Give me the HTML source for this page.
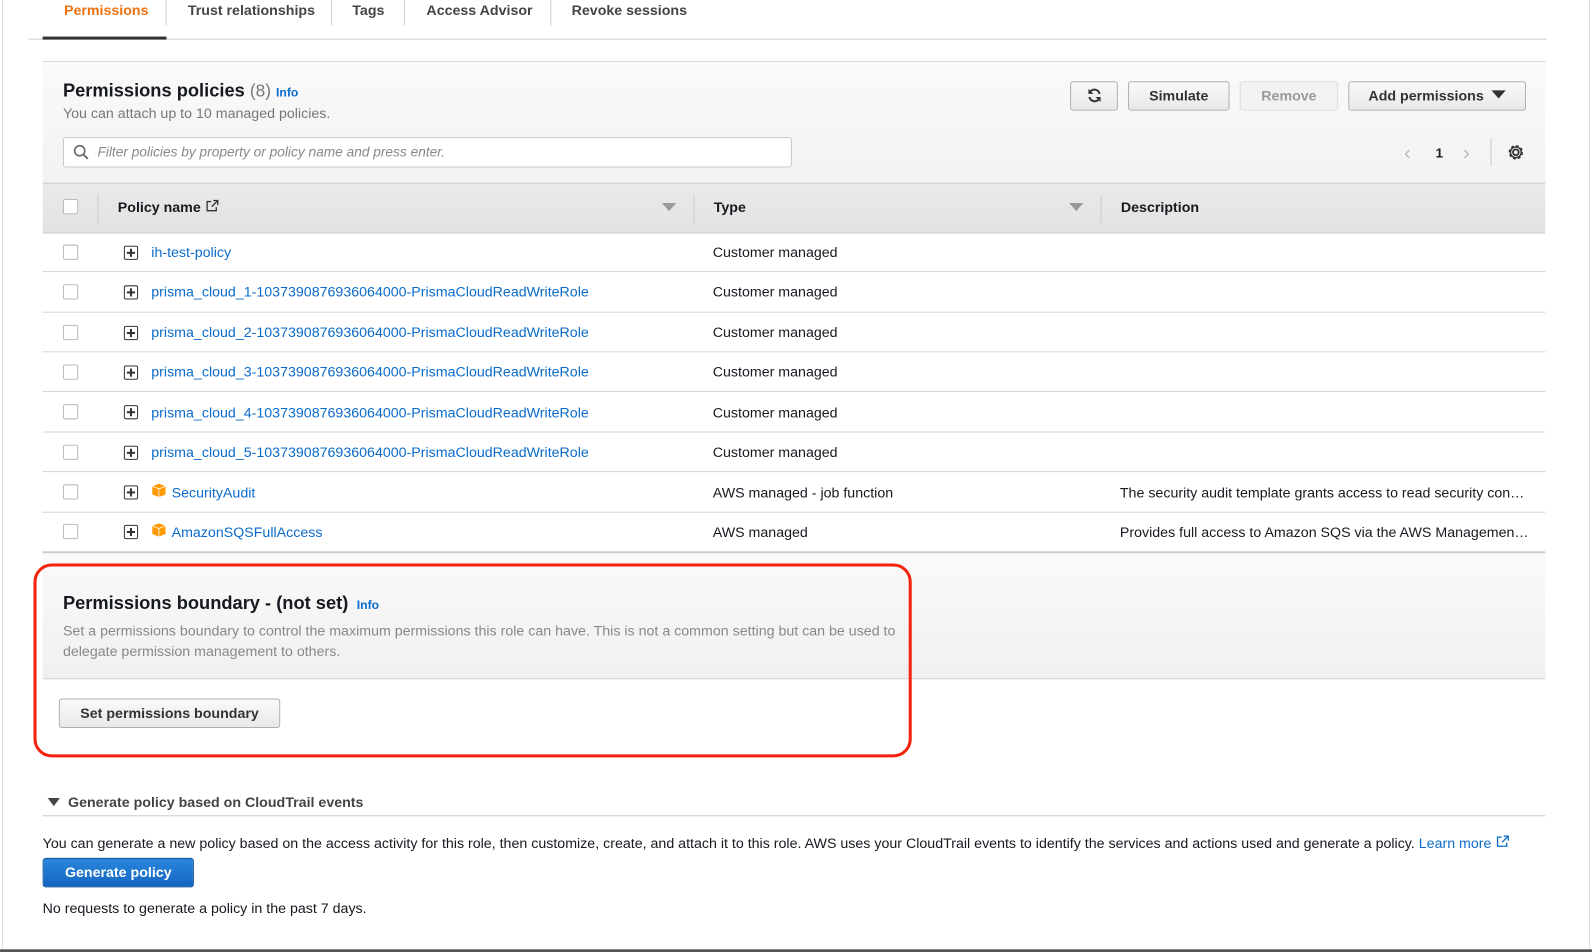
<!DOCTYPE html><html><head><style>
body{margin:0;width:1592px;height:951px;background:#fff;font-family:"Liberation Sans",Arial,sans-serif;font-size:14px;color:#16191f;position:relative;overflow:hidden}
#w{position:absolute;left:0;top:0;width:1568px;height:937px;transform:scale(1.0153);transform-origin:0 0}
.a{position:absolute;white-space:nowrap}
.b{font-weight:bold}
a,.l{color:#0b6bcb;text-decoration:none}
.btn{position:absolute;border:1px solid #b0b0b0;border-radius:3px;background:linear-gradient(#fafafa,#e8e8e8);font-weight:bold;color:#333;text-align:center;box-sizing:border-box;line-height:27px;font-size:14px}
.cb{position:absolute;left:62px;width:13px;height:13px;border:1px solid #bbb;border-radius:2px;background:#fff}
.pl{position:absolute;left:122px;width:12px;height:12px;border:1.3px solid #333;border-radius:2px}
.pl:before{content:"";position:absolute;left:2px;top:5.3px;width:8px;height:1.4px;background:#333}
.pl:after{content:"";position:absolute;top:2px;left:5.3px;height:8px;width:1.4px;background:#333}
.hr{position:absolute;left:42px;width:1480px;height:1px;background:#d5d5d5}
.cube{position:absolute;left:149px;width:15px;height:14px}
</style></head><body><div id="w">
<div class="a" style="left:2px;top:0;width:1px;height:937px;background:#ddd"></div>
<div class="a" style="left:1565px;top:0;width:1px;height:937px;background:#ddd"></div>
<div class="a" style="left:0;top:935px;width:1592px;height:3px;background:#555"></div>
<div class="a b" style="left:63px;top:2px;color:#ec7211">Permissions</div>
<div class="a b" style="left:185px;top:2px;color:#444">Trust relationships</div>
<div class="a b" style="left:347px;top:2px;color:#444">Tags</div>
<div class="a b" style="left:420px;top:2px;color:#444">Access Advisor</div>
<div class="a b" style="left:563px;top:2px;color:#444">Revoke sessions</div>
<div class="a" style="left:163px;top:0;width:1px;height:25px;background:#ccc"></div>
<div class="a" style="left:326px;top:0;width:1px;height:25px;background:#ccc"></div>
<div class="a" style="left:398px;top:0;width:1px;height:25px;background:#ccc"></div>
<div class="a" style="left:542px;top:0;width:1px;height:25px;background:#ccc"></div>
<div class="a" style="left:28px;top:38px;width:1495px;height:1px;background:#ccc"></div>
<div class="a" style="left:42px;top:36px;width:122px;height:3px;background:#333"></div>
<div class="a" style="left:42px;top:60px;width:1480px;height:120px;background:linear-gradient(#fafafa,#f2f2f2);border-top:1px solid #d5d5d5"></div>
<div class="a" style="left:62px;top:79px;font-size:18px"><b>Permissions policies</b> <span style="color:#777;font-size:17px">(8)</span> <span class="b l" style="font-size:12px">Info</span></div>
<div class="a" style="left:62px;top:103px;color:#777">You can attach up to 10 managed policies.</div>
<div class="a" style="left:62px;top:135px;width:716px;height:28px;border:1px solid #c8c8c8;border-radius:3px;background:#fff"></div>
<svg class="a" style="left:72px;top:142px" width="16" height="16" viewBox="0 0 16 16"><circle cx="6.5" cy="6.5" r="5" fill="none" stroke="#666" stroke-width="1.6"/><path d="M10 10l4.5 4.5" stroke="#666" stroke-width="1.8"/></svg>
<div class="a" style="left:96px;top:142px;color:#888;font-style:italic;font-size:13.5px">Filter policies by property or policy name and press enter.</div>
<div class="btn" style="left:1054px;top:80px;width:47px;height:29px"><svg width="16" height="16" viewBox="0 0 16 16" style="vertical-align:-3px"><path d="M13 6.5A5.2 5.2 0 0 0 3.3 5M3 9.5A5.2 5.2 0 0 0 12.7 11" fill="none" stroke="#333" stroke-width="2"/><path d="M2 1.5v5h5zM14 14.5v-5H9z" fill="#333"/></svg></div>
<div class="btn" style="left:1111px;top:80px;width:100px;height:29px">Simulate</div>
<div class="btn" style="left:1221px;top:80px;width:97px;height:29px;color:#999;border-color:#ddd;background:#f2f2f2">Remove</div>
<div class="btn" style="left:1328px;top:80px;width:175px;height:29px">Add permissions &nbsp;<span style="display:inline-block;border:7px solid transparent;border-top:8px solid #333;border-bottom:0;vertical-align:2px"></span></div>
<div class="a" style="left:1383px;top:140px;color:#bbb;font-size:20px">&#x2039;</div>
<div class="a b" style="left:1414px;top:143px;font-size:13px">1</div>
<div class="a" style="left:1441px;top:140px;color:#bbb;font-size:20px">&#x203A;</div>
<div class="a" style="left:1468px;top:136px;width:1px;height:28px;background:#ccc"></div>
<svg class="a" style="left:1484px;top:141px" width="18" height="18" viewBox="0 0 18 18"><circle cx="9" cy="9" r="2.8" fill="none" stroke="#333" stroke-width="1.8"/><circle cx="9" cy="9" r="6" fill="none" stroke="#333" stroke-width="2.2" stroke-dasharray="2.6 2.1"/><circle cx="9" cy="9" r="5.3" fill="none" stroke="#333" stroke-width="1.4"/></svg>
<div class="a" style="left:42px;top:180px;width:1480px;height:48px;background:linear-gradient(#eaeaea,#e2e2e2);border-top:1px solid #ccc;border-bottom:1px solid #ccc"></div>
<div class="cb" style="top:196px"></div>
<div class="a" style="left:96px;top:192px;width:1px;height:27px;background:#ccc"></div>
<div class="a b" style="left:116px;top:196px">Policy name <svg width="14" height="14" viewBox="0 0 14 14" style="vertical-align:-1px"><path d="M6 2.5H2v9h9V8M8 1.5h4.5V6M12.5 1.5L6.5 7.5" fill="none" stroke="#333" stroke-width="1.3"/></svg></div>
<div class="a" style="left:652px;top:200px;border:7px solid transparent;border-top:8px solid #999;border-bottom:0"></div>
<div class="a" style="left:683px;top:192px;width:1px;height:27px;background:#ccc"></div>
<div class="a b" style="left:703px;top:196px">Type</div>
<div class="a" style="left:1053px;top:200px;border:7px solid transparent;border-top:8px solid #999;border-bottom:0"></div>
<div class="a" style="left:1084px;top:192px;width:1px;height:27px;background:#ccc"></div>
<div class="a b" style="left:1104px;top:196px">Description</div>
<div class="cb" style="top:241px"></div><div class="pl" style="top:242px"></div><div class="a l" style="left:149px;top:240px">ih-test-policy</div><div class="a" style="left:702px;top:240px">Customer managed</div><div class="hr" style="top:267px"></div>
<div class="cb" style="top:280px"></div><div class="pl" style="top:281px"></div><div class="a l" style="left:149px;top:279px">prisma_cloud_1-1037390876936064000-PrismaCloudReadWriteRole</div><div class="a" style="left:702px;top:279px">Customer managed</div><div class="hr" style="top:307px"></div>
<div class="cb" style="top:320px"></div><div class="pl" style="top:321px"></div><div class="a l" style="left:149px;top:319px">prisma_cloud_2-1037390876936064000-PrismaCloudReadWriteRole</div><div class="a" style="left:702px;top:319px">Customer managed</div><div class="hr" style="top:346px"></div>
<div class="cb" style="top:359px"></div><div class="pl" style="top:360px"></div><div class="a l" style="left:149px;top:358px">prisma_cloud_3-1037390876936064000-PrismaCloudReadWriteRole</div><div class="a" style="left:702px;top:358px">Customer managed</div><div class="hr" style="top:385px"></div>
<div class="cb" style="top:398px"></div><div class="pl" style="top:399px"></div><div class="a l" style="left:149px;top:398px">prisma_cloud_4-1037390876936064000-PrismaCloudReadWriteRole</div><div class="a" style="left:702px;top:398px">Customer managed</div><div class="hr" style="top:425px"></div>
<div class="cb" style="top:438px"></div><div class="pl" style="top:439px"></div><div class="a l" style="left:149px;top:437px">prisma_cloud_5-1037390876936064000-PrismaCloudReadWriteRole</div><div class="a" style="left:702px;top:437px">Customer managed</div><div class="hr" style="top:464px"></div>
<div class="cb" style="top:477px"></div><div class="pl" style="top:478px"></div><svg class="cube" style="top:476px" viewBox="0 0 15 14"><path d="M1 3l6.5-2.5L14 3v8l-6.5 2.5L1 11z" fill="#f90"/><path d="M7.5 5.5v8M1 3l6.5 2.5L14 3" fill="none" stroke="#fff" stroke-width=".8"/></svg><div class="a l" style="left:169px;top:477px">SecurityAudit</div><div class="a" style="left:702px;top:477px">AWS managed - job function</div><div class="a" style="left:1103px;top:477px">The security audit template grants access to read security con…</div><div class="hr" style="top:504px"></div>
<div class="cb" style="top:516px"></div><div class="pl" style="top:517px"></div><svg class="cube" style="top:515px" viewBox="0 0 15 14"><path d="M1 3l6.5-2.5L14 3v8l-6.5 2.5L1 11z" fill="#f90"/><path d="M7.5 5.5v8M1 3l6.5 2.5L14 3" fill="none" stroke="#fff" stroke-width=".8"/></svg><div class="a l" style="left:169px;top:516px">AmazonSQSFullAccess</div><div class="a" style="left:702px;top:516px">AWS managed</div><div class="a" style="left:1103px;top:516px">Provides full access to Amazon SQS via the AWS Managemen…</div>
<div class="a" style="left:42px;top:543px;width:1480px;height:2px;background:#ccc"></div>
<div class="a" style="left:42px;top:545px;width:1480px;height:123px;background:linear-gradient(#fafafa,#f0f0f0);border-bottom:1px solid #ccc"></div>
<div class="a" style="left:62px;top:584px;font-size:18px"><b>Permissions boundary - (not set)</b> <span class="b l" style="font-size:12px">&nbsp;Info</span></div>
<div class="a" style="left:62px;top:611px;color:#888;line-height:20px;white-space:normal;width:830px">Set a permissions boundary to control the maximum permissions this role can have. This is not a common setting but can be used to delegate permission management to others.</div>
<div class="btn" style="left:58px;top:688px;width:218px;height:29px">Set permissions boundary</div>
<div class="a" style="left:33px;top:555px;width:859px;height:185px;border:3.5px solid #f5230d;border-radius:18px"></div>
<div class="a" style="left:47px;top:786px;border:6px solid transparent;border-top:8px solid #444;border-bottom:0"></div>
<div class="a b" style="left:67px;top:782px;color:#444">Generate policy based on CloudTrail events</div>
<div class="a" style="left:42px;top:803px;width:1480px;height:1px;background:#ccc"></div>
<div class="a" style="left:42px;top:822px">You can generate a new policy based on the access activity for this role, then customize, create, and attach it to this role. AWS uses your CloudTrail events to identify the services and actions used and generate a policy. <span class="l">Learn more <svg width="14" height="14" viewBox="0 0 14 14" style="vertical-align:-1px"><path d="M6 2.5H2v9h9V8M8 1.5h4.5V6M12.5 1.5L6.5 7.5" fill="none" stroke="#0b6bcb" stroke-width="1.3"/></svg></span></div>
<div class="btn" style="left:42px;top:845px;width:149px;height:29px;background:linear-gradient(#2a86dc,#1466c0);border-color:#155a9e;color:#fff">Generate policy</div>
<div class="a" style="left:42px;top:886px">No requests to generate a policy in the past 7 days.</div>
</div></body></html>
